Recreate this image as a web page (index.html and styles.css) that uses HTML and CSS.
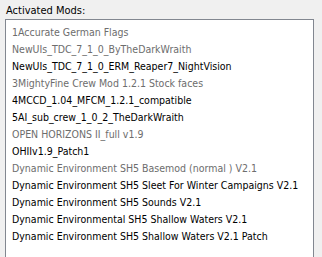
FILE: index.html
```html
<!DOCTYPE html>
<html>
<head>
<meta charset="utf-8">
<link rel="stylesheet" href="styles.css">
</head>
<body>
<div class="panel">
  <div class="label">Activated Mods:</div>
  <ul class="mods">
    <li class="off">1Accurate German Flags</li>
    <li class="off">NewUIs_TDC_7_1_0_ByTheDarkWraith</li>
    <li>NewUIs_TDC_7_1_0_ERM_Reaper7_NightVision</li>
    <li class="off">3MightyFine Crew Mod 1.2.1 Stock faces</li>
    <li>4MCCD_1.04_MFCM_1.2.1_compatible</li>
    <li>5AI_sub_crew_1_0_2_TheDarkWraith</li>
    <li class="off">OPEN HORIZONS II_full v1.9</li>
    <li>OHIIv1.9_Patch1</li>
    <li class="off">Dynamic Environment SH5 Basemod (normal ) V2.1</li>
    <li>Dynamic Environment SH5 Sleet For Winter Campaigns V2.1</li>
    <li>Dynamic Environment SH5 Sounds V2.1</li>
    <li>Dynamic Environmental SH5 Shallow Waters V2.1</li>
    <li>Dynamic Environment SH5 Shallow Waters V2.1 Patch</li>
  </ul>
</div>
</body>
</html>
```

FILE: styles.css
```css
html, body {
  margin: 0;
  padding: 0;
  background: #f0f0f0;
  overflow: hidden;
}
.panel {
  width: 322px;
  height: 257px;
  font-family: "DejaVu Sans Condensed", "DejaVu Sans", sans-serif;
  font-size: 10.5px;
  color: #000;
}
.label {
  padding: 4px 0 0 6px;
  height: 15px;
  line-height: 14px;
  font-size: 11px;
}
.mods {
  list-style: none;
  margin: 0 0 0 5px;
  width: 309px;
  height: 238px;
  border: 1px solid #828790;
  border-bottom: none;
  background: #fff;
  padding: 4px 0 0 6px;
  box-sizing: border-box;
}
.mods li {
  height: 17px;
  line-height: 17px;
  white-space: nowrap;
}
.mods li.off {
  color: #6d6d6d;
}
```
